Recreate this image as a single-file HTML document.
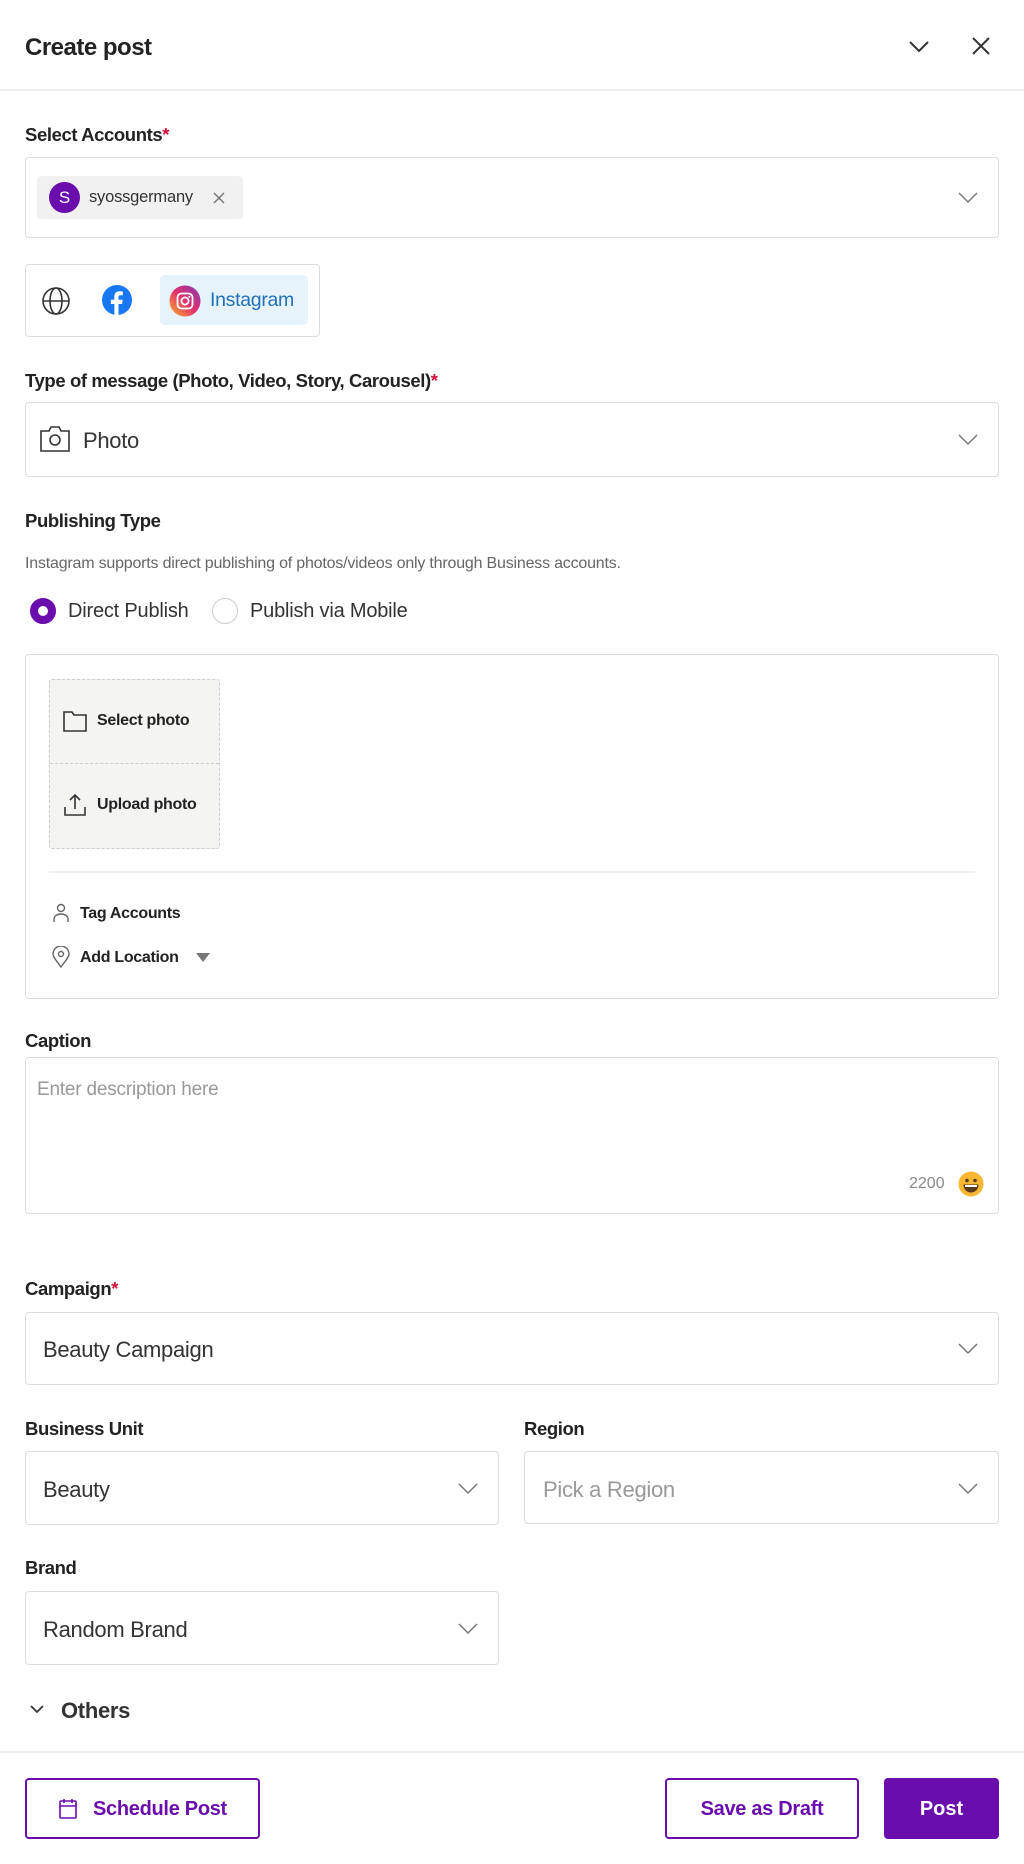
<!DOCTYPE html>
<html><head><meta charset="utf-8"><style>
*{box-sizing:border-box;margin:0;padding:0}
body{width:1024px;height:1864px;background:#fff;font-family:"Liberation Sans",sans-serif;color:#222;position:relative;overflow:hidden}
.a{position:absolute}
.lbl{position:absolute;left:25px;font-size:18.5px;font-weight:bold;color:#222;letter-spacing:-0.4px}
.req{color:#d0103a}
.box{position:absolute;border:1.5px solid #dcdcdc;border-radius:4px;background:#fff}
.chev{position:absolute;width:20px;height:12px}
.val{position:absolute;font-size:22px;color:#333;letter-spacing:-0.3px}
</style></head><body>
<div class="a" style="left:25px;top:34px;font-size:24px;font-weight:bold;letter-spacing:-0.5px">Create post</div>
<svg class="a" style="left:908px;top:40px" width="22" height="14" viewBox="0 0 22 14"><path d="M2 2l9 9 9-9" fill="none" stroke="#333" stroke-width="2"/></svg>
<svg class="a" style="left:971px;top:36px" width="20" height="20" viewBox="0 0 20 20"><path d="M2 2l16 16M18 2L2 18" stroke="#333" stroke-width="2"/></svg>
<div class="a" style="left:0;top:89px;width:1024px;height:2px;background:#eee"></div>

<div class="lbl" style="top:124px">Select Accounts<span class="req">*</span></div>
<div class="box" style="left:25px;top:157px;width:974px;height:81px"></div>
<div class="a" style="left:37px;top:176px;width:206px;height:43px;background:#f1f1f1;border-radius:4px"></div>
<div class="a" style="left:49px;top:182px;width:31px;height:31px;border-radius:50%;background:#6a0dad;color:#fff;font-size:17px;text-align:center;line-height:31px">S</div>
<div class="a" style="left:89px;top:188px;font-size:16.5px;color:#333;letter-spacing:-0.2px">syossgermany</div>
<svg class="a" style="left:213px;top:192px" width="12" height="12"><path d="M1 1l10 10M11 1L1 11" stroke="#777" stroke-width="1.5"/></svg>
<svg class="chev" style="left:958px;top:192px" viewBox="0 0 20 12"><path d="M1 1l9 9 9-9" fill="none" stroke="#777" stroke-width="1.5"/></svg>

<div class="box" style="left:25px;top:264px;width:295px;height:73px"></div>
<svg class="a" style="left:41px;top:286px" width="30" height="30" viewBox="0 0 30 30"><g fill="none" stroke="#333" stroke-width="1.6"><circle cx="15" cy="15" r="13"/><ellipse cx="15" cy="15" rx="6" ry="13"/><path d="M2 15h26"/></g></svg>
<svg class="a" style="left:101px;top:284px" width="32" height="32" viewBox="0 0 32 32"><circle cx="16" cy="16" r="15" fill="#1877f2"/><path d="M17.5 31V20h3.6l.6-4.2h-4.2v-2.6c0-1.2.4-2 2.1-2h2.2V7.5c-.4-.1-1.7-.2-3.2-.2-3.2 0-5.300 1.900-5.300 5.400v3.100H9.800V20h3.600v11z" fill="#fff"/></svg>
<div class="a" style="left:160px;top:275px;width:148px;height:50px;background:#e6f3fb;border-radius:5px"></div>
<svg class="a" style="left:169px;top:285px" width="32" height="32" viewBox="0 0 32 32"><defs><linearGradient id="g" x1="0" y1="1" x2="1" y2="0"><stop offset="0" stop-color="#fdb42b"/><stop offset=".5" stop-color="#e1306c"/><stop offset="1" stop-color="#833ab4"/></linearGradient></defs><circle cx="16" cy="16" r="15.5" fill="url(#g)"/><rect x="8.5" y="8.5" width="15" height="15" rx="4" fill="none" stroke="#fff" stroke-width="1.8"/><circle cx="16" cy="16" r="3.6" fill="none" stroke="#fff" stroke-width="1.8"/><circle cx="20.3" cy="11.7" r="1" fill="#fff"/></svg>
<div class="a" style="left:210px;top:289px;font-size:19.5px;color:#2271b8;letter-spacing:-0.3px">Instagram</div>

<div class="lbl" style="top:370px">Type of message (Photo, Video, Story, Carousel)<span class="req">*</span></div>
<div class="box" style="left:25px;top:402px;width:974px;height:75px"></div>
<svg class="a" style="left:39px;top:425px" width="32" height="28" viewBox="0 0 32 28"><g fill="none" stroke="#333" stroke-width="1.6"><path d="M2 6h8l2-4h8l2 4h8v20H2z"/><circle cx="16" cy="15" r="5"/></g></svg>
<div class="val" style="left:83px;top:428px">Photo</div>
<svg class="chev" style="left:958px;top:434px" viewBox="0 0 20 12"><path d="M1 1l9 9 9-9" fill="none" stroke="#777" stroke-width="1.5"/></svg>

<div class="lbl" style="top:510px">Publishing Type</div>
<div class="a" style="left:25px;top:555px;font-size:16px;color:#666;letter-spacing:-0.2px">Instagram supports direct publishing of photos/videos only through Business accounts.</div>
<div class="a" style="left:30px;top:598px;width:26px;height:26px;border-radius:50%;border:8px solid #6a0dad"></div>
<div class="a" style="left:68px;top:600px;font-size:20px;color:#333;letter-spacing:-0.2px">Direct Publish</div>
<div class="a" style="left:212px;top:598px;width:26px;height:26px;border-radius:50%;border:1.5px solid #ccc"></div>
<div class="a" style="left:250px;top:600px;font-size:20px;color:#333;letter-spacing:-0.2px">Publish via Mobile</div>

<div class="box" style="left:25px;top:654px;width:974px;height:345px"></div>
<div class="a" style="left:49px;top:679px;width:171px;height:170px;background:#f4f4f3;border:1.5px dashed #ccc;border-radius:3px"></div>
<div class="a" style="left:50px;top:763px;width:169px;height:0;border-top:1.5px dashed #ccc"></div>
<svg class="a" style="left:63px;top:710px" width="24" height="22" viewBox="0 0 24 22"><path d="M1 2h8l2 3h12v16H1z" fill="none" stroke="#333" stroke-width="1.6"/></svg>
<div class="a" style="left:97px;top:712px;font-size:16px;font-weight:bold;color:#222;letter-spacing:-0.3px">Select photo</div>
<svg class="a" style="left:63px;top:793px" width="24" height="24" viewBox="0 0 24 24"><g fill="none" stroke="#333" stroke-width="1.6"><path d="M12 16V2M7 7l5-5 5 5M2 14v8h20v-8"/></g></svg>
<div class="a" style="left:97px;top:796px;font-size:16px;font-weight:bold;color:#222;letter-spacing:-0.3px">Upload photo</div>
<div class="a" style="left:49px;top:871px;width:926px;height:2px;background:#eee"></div>
<svg class="a" style="left:53px;top:903px" width="16" height="20" viewBox="0 0 16 20"><g fill="none" stroke="#666" stroke-width="1.4"><circle cx="8" cy="5" r="3.5"/><path d="M1 19v-3a7 5 0 0114 0v3"/></g></svg>
<div class="a" style="left:80px;top:905px;font-size:16px;font-weight:bold;color:#222;letter-spacing:-0.3px">Tag Accounts</div>
<svg class="a" style="left:52px;top:946px" width="18" height="22" viewBox="0 0 18 22"><g fill="none" stroke="#666" stroke-width="1.4"><path d="M9 21C4 14 1 11 1 8a8 8 0 0116 0c0 3-3 6-8 13z"/><circle cx="9" cy="8" r="2.5"/></g></svg>
<div class="a" style="left:80px;top:949px;font-size:16px;font-weight:bold;color:#222;letter-spacing:-0.3px">Add Location</div>
<svg class="a" style="left:196px;top:953px" width="14" height="10"><path d="M0 0h14L7 9z" fill="#777"/></svg>

<div class="lbl" style="top:1030px">Caption</div>
<div class="box" style="left:25px;top:1057px;width:974px;height:157px"></div>
<div class="a" style="left:37px;top:1079px;font-size:19px;color:#999;letter-spacing:-0.2px">Enter description here</div>
<div class="a" style="left:909px;top:1175px;font-size:16px;color:#888">2200</div>
<svg class="a" style="left:958px;top:1171px" width="26" height="26" viewBox="0 0 26 26"><circle cx="13" cy="13" r="12.5" fill="#f7b731"/><circle cx="9" cy="9.5" r="1.8" fill="#5a3a1a"/><circle cx="17" cy="9.5" r="1.8" fill="#5a3a1a"/><path d="M5.5 13.5h15c0 5-3.500 8-7.500 8s-7.500-3-7.500-8z" fill="#5a3a1a"/><path d="M7 14h12v2H7z" fill="#fff"/></svg>

<div class="lbl" style="top:1278px">Campaign<span class="req">*</span></div>
<div class="box" style="left:25px;top:1312px;width:974px;height:73px"></div>
<div class="val" style="left:43px;top:1337px">Beauty Campaign</div>
<svg class="chev" style="left:958px;top:1343px" viewBox="0 0 20 12"><path d="M1 1l9 9 9-9" fill="none" stroke="#777" stroke-width="1.5"/></svg>

<div class="lbl" style="top:1418px">Business Unit</div>
<div class="lbl" style="top:1418px;left:524px">Region</div>
<div class="box" style="left:25px;top:1451px;width:474px;height:74px"></div>
<div class="val" style="left:43px;top:1477px">Beauty</div>
<svg class="chev" style="left:458px;top:1483px" viewBox="0 0 20 12"><path d="M1 1l9 9 9-9" fill="none" stroke="#777" stroke-width="1.5"/></svg>
<div class="box" style="left:524px;top:1451px;width:475px;height:73px"></div>
<div class="val" style="left:543px;top:1477px;color:#999">Pick a Region</div>
<svg class="chev" style="left:958px;top:1483px" viewBox="0 0 20 12"><path d="M1 1l9 9 9-9" fill="none" stroke="#777" stroke-width="1.5"/></svg>

<div class="lbl" style="top:1557px">Brand</div>
<div class="box" style="left:25px;top:1591px;width:474px;height:74px"></div>
<div class="val" style="left:43px;top:1617px">Random Brand</div>
<svg class="chev" style="left:458px;top:1623px" viewBox="0 0 20 12"><path d="M1 1l9 9 9-9" fill="none" stroke="#777" stroke-width="1.5"/></svg>

<svg class="a" style="left:30px;top:1705px" width="14" height="9" viewBox="0 0 14 9"><path d="M1 1l6 6 6-6" fill="none" stroke="#333" stroke-width="1.8"/></svg>
<div class="a" style="left:61px;top:1698px;font-size:22px;font-weight:bold;color:#333;letter-spacing:-0.3px">Others</div>

<div class="a" style="left:0;top:1751px;width:1024px;height:2px;background:#eee"></div>
<div class="a" style="left:25px;top:1778px;width:235px;height:61px;border:2px solid #6a0dad;border-radius:4px"></div>
<svg class="a" style="left:59px;top:1798px" width="18" height="21" viewBox="0 0 18 21"><g fill="none" stroke="#6a0dad" stroke-width="1.6"><rect x="1" y="3" width="16" height="17" rx="1"/><path d="M1 8h16M5 1v4M13 1v4"/></g></svg>
<div class="a" style="left:93px;top:1798px;font-size:20px;font-weight:bold;color:#6a0dad;letter-spacing:-0.3px">Schedule Post</div>
<div class="a" style="left:665px;top:1778px;width:194px;height:61px;border:2px solid #6a0dad;border-radius:4px;color:#6a0dad;font-size:20px;font-weight:bold;text-align:center;line-height:59px;letter-spacing:-0.3px">Save as Draft</div>
<div class="a" style="left:884px;top:1778px;width:115px;height:61px;background:#6a0dad;border-radius:4px;color:#fff;font-size:20px;font-weight:bold;text-align:center;line-height:63px">Post</div>
</body></html>
